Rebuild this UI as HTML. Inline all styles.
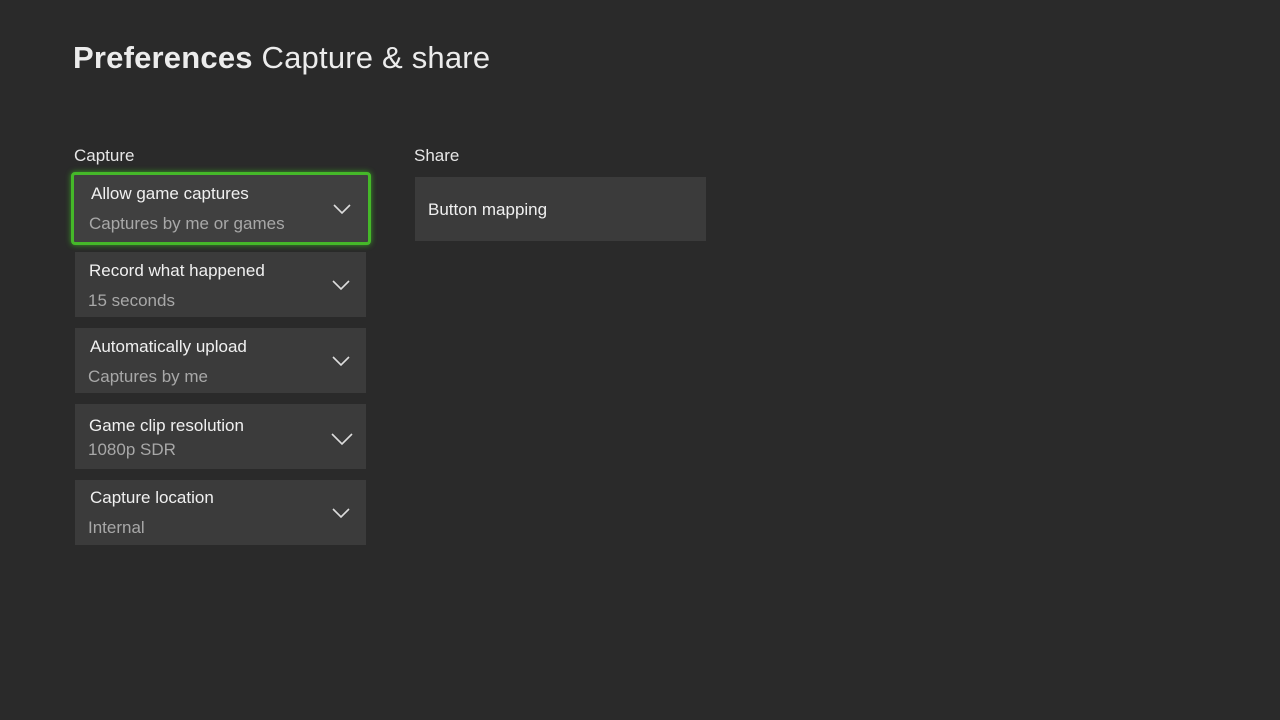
<!DOCTYPE html>
<html><head><style>
body{margin:0;width:1280px;height:720px;background:#2a2a2a;font-family:"Liberation Sans",sans-serif;overflow:hidden;position:relative}
.h{position:absolute;left:73px;top:40px;font-size:31px;color:#ececec;white-space:nowrap;letter-spacing:0.2px}
.h b{font-weight:bold}
.lab{position:absolute;font-size:17px;color:#e6e6e6}
.t{position:absolute;left:75px;width:291px;height:65px;background:#3b3b3b}
.t .a{position:absolute;left:14px;top:9px;font-size:17px;color:#f0f0f0;white-space:nowrap}
.t .b{position:absolute;left:13px;top:39px;font-size:17px;color:#a8a8a8;white-space:nowrap}
.t svg{position:absolute;left:257px;top:27px}
.f{left:71px;top:172px;border:3px solid #45b829;border-radius:4px;box-shadow:0 0 6px #3a9a25;background:#404040;box-sizing:content-box;width:294px;height:67px}
</style></head><body>
<div class="h"><b>Preferences</b> Capture &amp; share</div>
<div class="lab" style="left:74px;top:146px">Capture</div>
<div class="lab" style="left:414px;top:146px">Share</div>
<div class="t f"><div class="a" style="left:17px;top:9px">Allow game captures</div><div class="b" style="left:15px;top:39px">Captures by me or games</div><svg style="left:259px;top:28px" width="18" height="12"><path d="M1 2l8 8 8-8" fill="none" stroke="#ddd" stroke-width="1.6"/></svg></div>
<div class="t" style="top:252px"><div class="a">Record what happened</div><div class="b">15 seconds</div><svg width="18" height="12"><path d="M1 2l8 8 8-8" fill="none" stroke="#ddd" stroke-width="1.6"/></svg></div>
<div class="t" style="top:328px"><div class="a" style="left:15px">Automatically upload</div><div class="b">Captures by me</div><svg width="18" height="12"><path d="M1 2l8 8 8-8" fill="none" stroke="#ddd" stroke-width="1.6"/></svg></div>
<div class="t" style="top:404px"><div class="a" style="top:12px">Game clip resolution</div><div class="b" style="top:36px">1080p SDR</div><svg style="left:256px;top:28px" width="22" height="14"><path d="M1 2l10 10 10-10" fill="none" stroke="#ddd" stroke-width="1.6"/></svg></div>
<div class="t" style="top:480px"><div class="a" style="left:15px;top:8px">Capture location</div><div class="b" style="top:38px">Internal</div><svg style="top:27px" width="18" height="12"><path d="M1 2l8 8 8-8" fill="none" stroke="#ddd" stroke-width="1.6"/></svg></div>
<div class="t" style="left:415px;top:177px;height:64px"><div class="a" style="left:13px;top:23px">Button mapping</div></div>
</body></html>
